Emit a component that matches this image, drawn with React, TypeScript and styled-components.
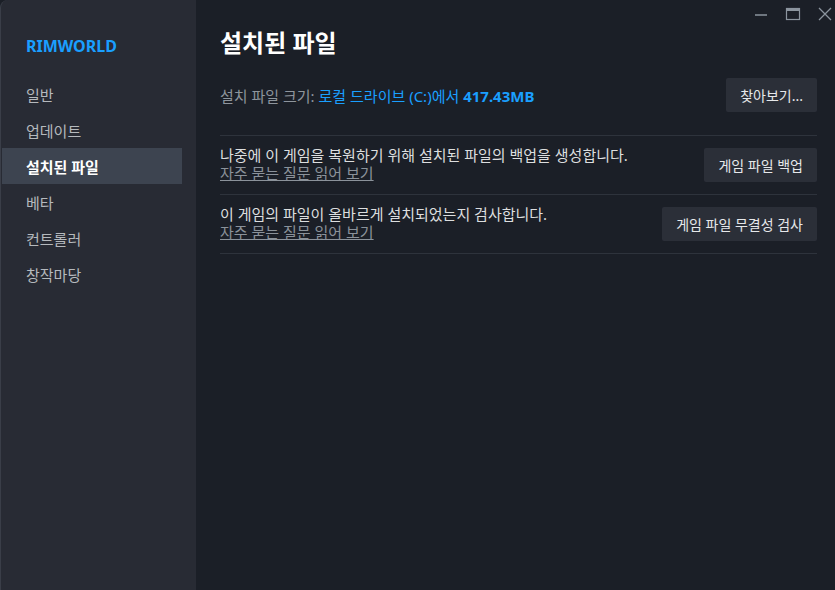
import * as React from "react"
import styled, { createGlobalStyle } from "styled-components"

const GlobalStyle = createGlobalStyle`
    html, body {
        margin: 0;
        padding: 0;
        background: #1b1f27;
    }
    body {
        font-family: "Noto Sans", "Noto Sans CJK KR", sans-serif;
    }
`

const Window = styled.div`
    display: flex;
    width: 835px;
    height: 590px;
    overflow: hidden;
    background: #1b1f27;
`

const Sidebar = styled.nav`
    width: 196px;
    flex-shrink: 0;
    background: #282b34;
    border-left: 1px solid #3a3e48;
    border-top-left-radius: 8px;
    padding: 34px 14px 0 0;
    box-sizing: border-box;
    display: flex;
    flex-direction: column;
`

const GameName = styled.div`
    color: #1a9fff;
    font-size: 16px;
    font-weight: 700;
    line-height: 24px;
    padding-left: 25px;
    margin-bottom: 18px;
`

const NavItem = styled.div<{ $active?: boolean }>`
    height: 36px;
    display: flex;
    align-items: center;
    margin-left: 1px;
    padding-left: 24px;
    font-size: 15px;
    color: ${p => (p.$active ? "#ffffff" : "#b5b9bd")};
    font-weight: ${p => (p.$active ? 700 : 400)};
    background: ${p => (p.$active ? "#3d4450" : "transparent")};
`

const Main = styled.main`
    flex: 1;
    display: flex;
    flex-direction: column;
    padding: 0 18px 0 24px;
`

const TitleBar = styled.div`
    display: flex;
    justify-content: flex-end;
    align-items: center;
    gap: 16px;
    height: 28px;
    margin-right: -16px;
`

const WinButton = styled.svg`
    width: 16px;
    height: 16px;
    color: #8b949e;
`

const Title = styled.h1`
    margin: 0;
    font-size: 24px;
    font-weight: 700;
    color: #ffffff;
    line-height: 30px;
`

const SizeRow = styled.div`
    display: flex;
    justify-content: space-between;
    align-items: center;
    margin-top: 20px;
    margin-bottom: 23px;
    font-size: 15px;
`

const Label = styled.span`
    color: #8e959d;
`

const Accent = styled.span<{ $bold?: boolean }>`
    color: #1a9fff;
    font-weight: ${p => (p.$bold ? 700 : 400)};
`

const Button = styled.button`
    height: 34px;
    padding: 0 14px;
    border: none;
    border-radius: 2px;
    background: #2b2f38;
    color: #e6e8ea;
    font-family: inherit;
    font-size: 14px;
    cursor: pointer;
`

const Section = styled.div`
    border-top: 1px solid #2e333c;
    border-bottom: 1px solid #2e333c;
`

const Row = styled.div`
    height: 58px;
    display: flex;
    justify-content: space-between;
    align-items: center;

    & + & {
        border-top: 1px solid #2e333c;
    }
`

const RowText = styled.div`
    display: flex;
    flex-direction: column;
    padding-bottom: 3px;
    font-size: 15px;
    line-height: 18px;
    color: #dcdedf;
`

const FaqLink = styled.a`
    color: #8b929a;
    text-decoration: underline;
    cursor: pointer;
`

const rows = [
    { text: "나중에 이 게임을 복원하기 위해 설치된 파일의 백업을 생성합니다.", button: "게임 파일 백업" },
    { text: "이 게임의 파일이 올바르게 설치되었는지 검사합니다.", button: "게임 파일 무결성 검사" }
]

const navItems = ["일반", "업데이트", "설치된 파일", "베타", "컨트롤러", "창작마당"]

export default function App() {
    return (
        <>
            <GlobalStyle />
            <Window>
                <Sidebar>
                    <GameName>RIMWORLD</GameName>
                    {navItems.map(item => (
                        <NavItem key={item} $active={item === "설치된 파일"}>
                            {item}
                        </NavItem>
                    ))}
                </Sidebar>
                <Main>
                    <TitleBar>
                        <WinButton viewBox="0 0 16 16">
                            <line x1="2" y1="9" x2="14" y2="9" stroke="currentColor" strokeWidth="1.5" />
                        </WinButton>
                        <WinButton viewBox="0 0 16 16">
                            <rect x="1.5" y="2.5" width="13" height="11" fill="none" stroke="currentColor" strokeWidth="1.2" />
                            <line x1="1.5" y1="4" x2="14.5" y2="4" stroke="currentColor" strokeWidth="2" />
                        </WinButton>
                        <WinButton viewBox="0 0 16 16">
                            <path d="M2 2 L14 14 M14 2 L2 14" stroke="currentColor" strokeWidth="1.3" />
                        </WinButton>
                    </TitleBar>
                    <Title>설치된 파일</Title>
                    <SizeRow>
                        <div>
                            <Label>설치 파일 크기: </Label>
                            <Accent>로컬 드라이브 (C:)에서 </Accent>
                            <Accent $bold>417.43MB</Accent>
                        </div>
                        <Button>찾아보기...</Button>
                    </SizeRow>
                    <Section>
                        {rows.map(r => (
                            <Row key={r.button}>
                                <RowText>
                                    <span>{r.text}</span>
                                    <FaqLink>자주 묻는 질문 읽어 보기</FaqLink>
                                </RowText>
                                <Button>{r.button}</Button>
                            </Row>
                        ))}
                    </Section>
                </Main>
            </Window>
        </>
    )
}
